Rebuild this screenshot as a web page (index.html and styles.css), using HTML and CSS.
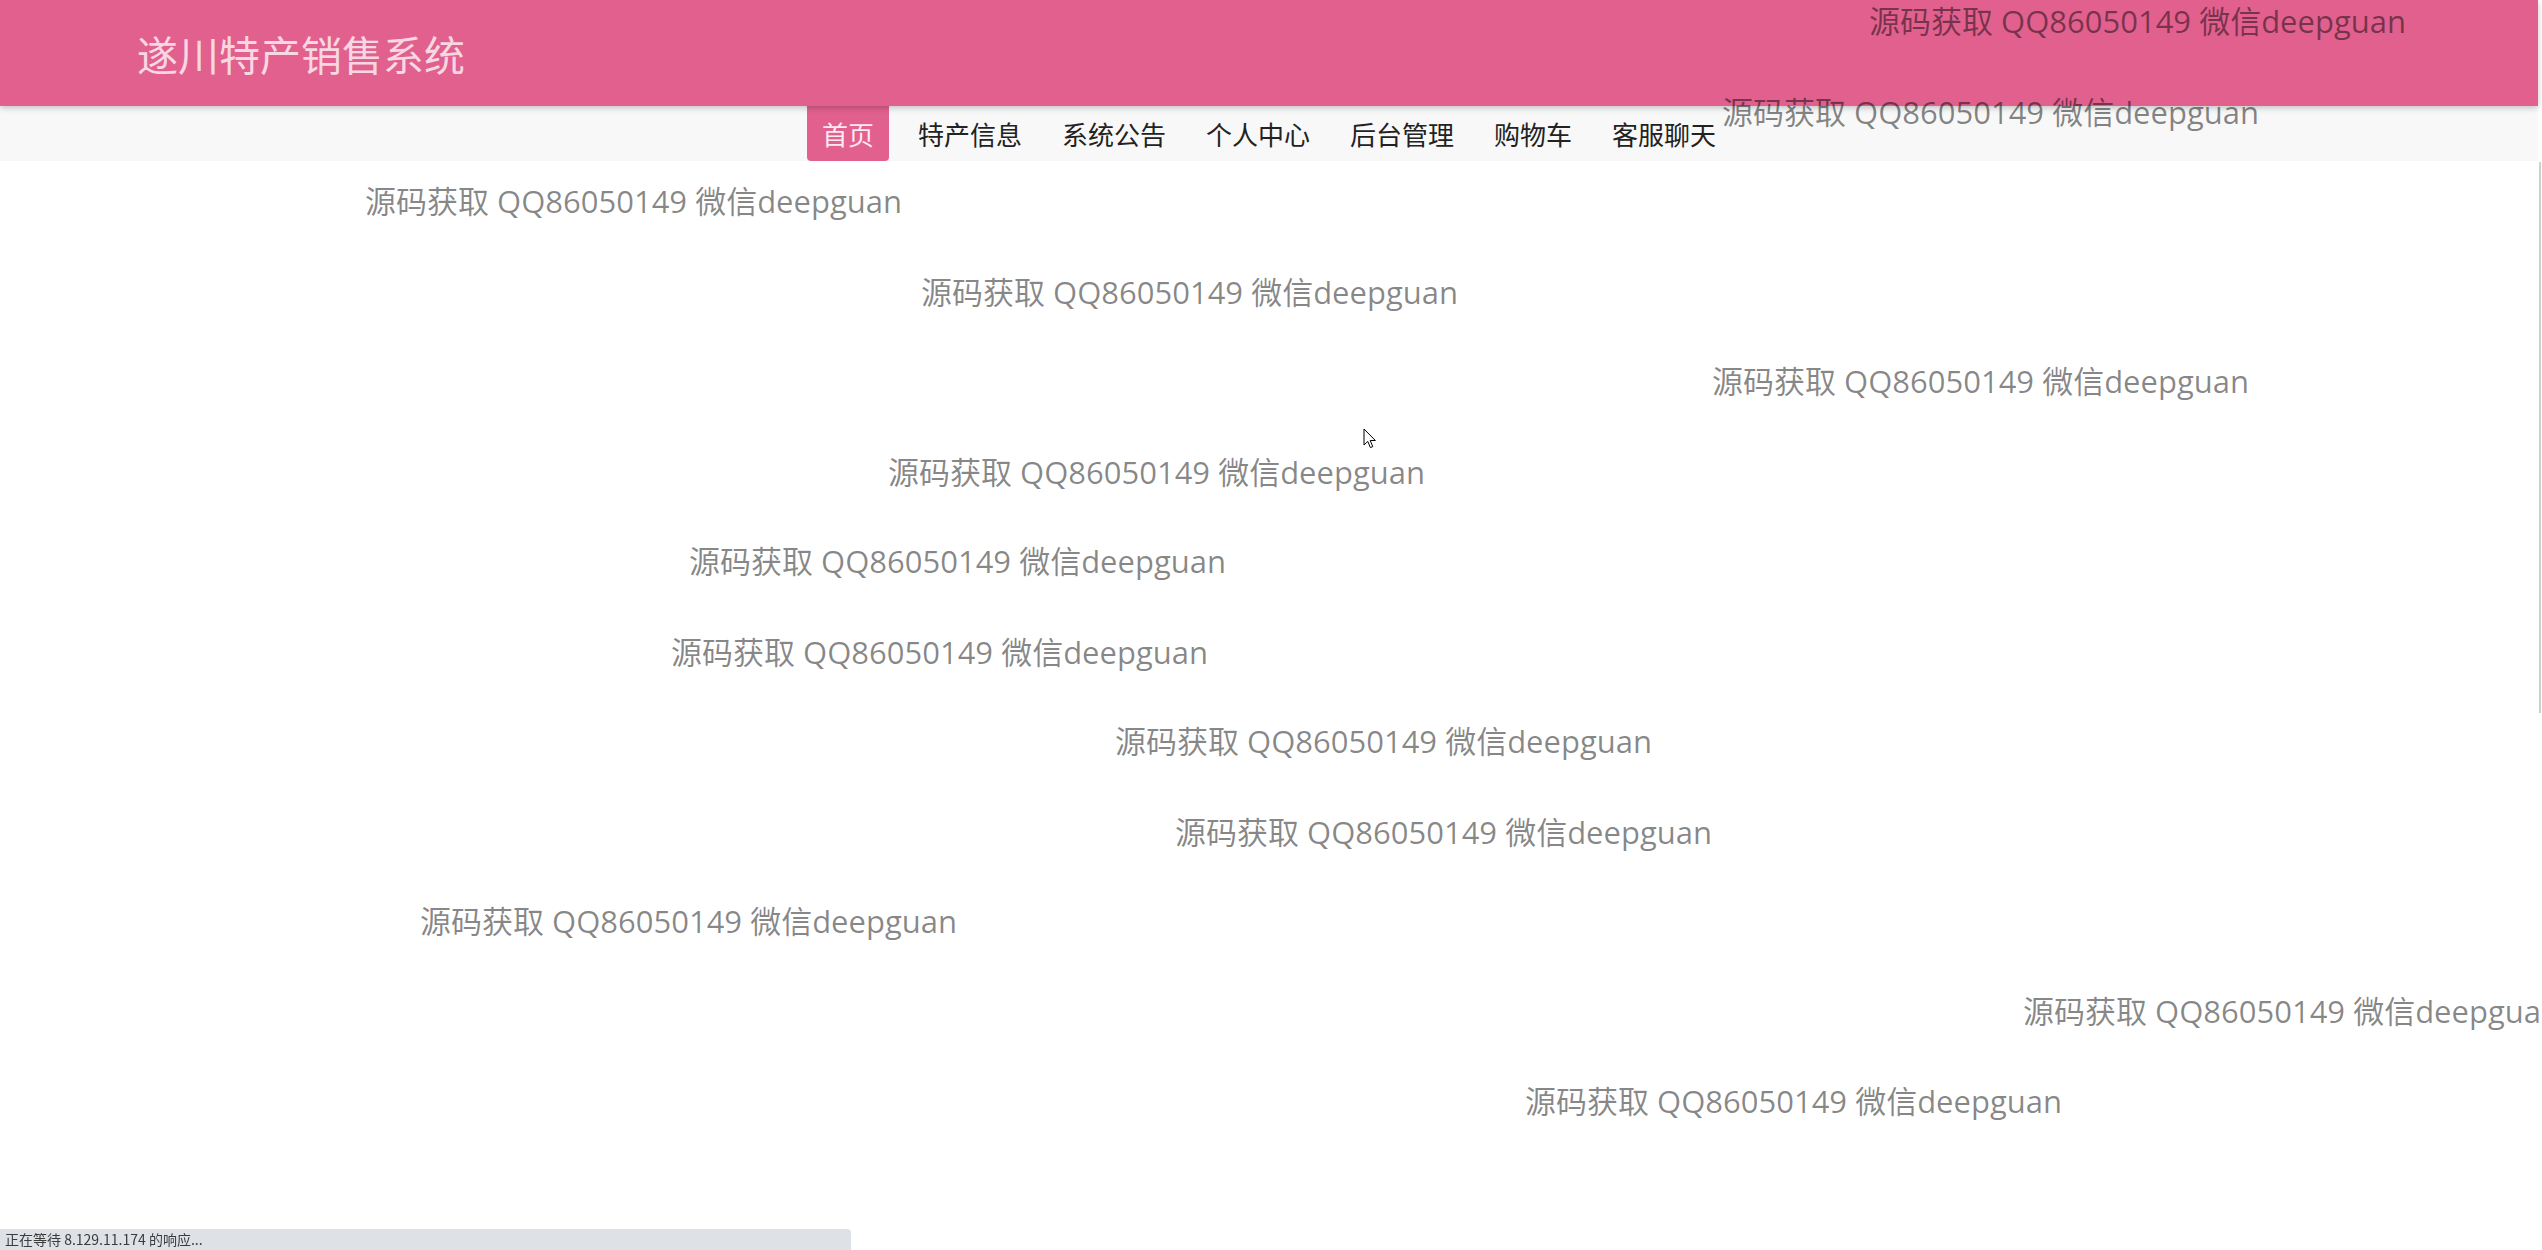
FILE: index.html
```html
<!DOCTYPE html>
<html lang="zh-CN">
<head>
<meta charset="utf-8">
<title>遂川特产销售系统</title>
<link rel="stylesheet" href="styles.css">
</head>
<body>
<div class="page">
  <header class="topbar">
    <h1 class="brand">遂川特产销售系统</h1>
  </header>
  <nav class="menu">
    <ul class="menu-list">
      <li class="menu-item active"><a href="#">首页</a></li>
      <li class="menu-item"><a href="#">特产信息</a></li>
      <li class="menu-item"><a href="#">系统公告</a></li>
      <li class="menu-item"><a href="#">个人中心</a></li>
      <li class="menu-item"><a href="#">后台管理</a></li>
      <li class="menu-item"><a href="#">购物车</a></li>
      <li class="menu-item"><a href="#">客服聊天</a></li>
    </ul>
  </nav>
  <main class="content"></main>
</div>

<div class="watermarks">
  <span class="wm" style="left:1869px;top:1px">源码获取 QQ86050149 微信deepguan</span>
  <span class="wm" style="left:1722px;top:92px">源码获取 QQ86050149 微信deepguan</span>
  <span class="wm" style="left:365px;top:181px">源码获取 QQ86050149 微信deepguan</span>
  <span class="wm" style="left:921px;top:272px">源码获取 QQ86050149 微信deepguan</span>
  <span class="wm" style="left:1712px;top:361px">源码获取 QQ86050149 微信deepguan</span>
  <span class="wm" style="left:888px;top:452px">源码获取 QQ86050149 微信deepguan</span>
  <span class="wm" style="left:689px;top:541px">源码获取 QQ86050149 微信deepguan</span>
  <span class="wm" style="left:671px;top:632px">源码获取 QQ86050149 微信deepguan</span>
  <span class="wm" style="left:1115px;top:721px">源码获取 QQ86050149 微信deepguan</span>
  <span class="wm" style="left:1175px;top:812px">源码获取 QQ86050149 微信deepguan</span>
  <span class="wm" style="left:420px;top:901px">源码获取 QQ86050149 微信deepguan</span>
  <span class="wm" style="left:2023px;top:991px">源码获取 QQ86050149 微信deepguan</span>
  <span class="wm" style="left:1525px;top:1081px">源码获取 QQ86050149 微信deepguan</span>
</div>

<div class="scroll-thumb"></div>

<svg class="cursor" width="14" height="22" viewBox="0 0 14 22" aria-hidden="true">
  <path d="M1 1 L1 17 L4.8 13.4 L7.4 19.6 L9.8 18.6 L7.2 12.5 L12.4 12.5 Z" fill="#fff" stroke="#000" stroke-width="1" stroke-linejoin="miter"/>
</svg>

<div class="status">正在等待 8.129.11.174 的响应...</div>
</body>
</html>
```

FILE: styles.css
```css
html, body {
  margin: 0;
  padding: 0;
  background: #ffffff;
  height: 100%;
  overflow: hidden;
}

body {
  font-family: "Noto Sans CJK SC", "Noto Sans", sans-serif;
  position: relative;
}

.page {
  margin-right: 4px;
  min-height: 100%;
}

.topbar {
  position: relative;
  z-index: 2;
  height: 106px;
  background: #e1608e;
  box-shadow: 0 2px 6px rgba(0, 0, 0, 0.22);
  display: flex;
  align-items: center;
  padding-left: 137px;
}

.brand {
  margin: 0;
  font-size: 41px;
  font-weight: 400;
  color: rgba(255, 255, 255, 0.76);
  line-height: 1;
}

.menu {
  position: relative;
  z-index: 1;
  height: 55px;
  background: #f8f8f8;
}

.menu-list {
  list-style: none;
  margin: 0;
  padding: 0;
  display: flex;
  justify-content: center;
  height: 100%;
}

.menu-item {
  margin: 0 5px;
}

.menu-item.active {
  margin-right: 9px;
}

.menu-item a {
  display: block;
  height: 55px;
  line-height: 55px;
  padding: 0 15px;
  font-size: 26px;
  font-weight: 400;
  color: #222222;
  text-decoration: none;
}

.menu-item.active a {
  background: #e1608e;
  color: #fde9f1;
  border-radius: 0 0 4px 4px;
}

.content {
  min-height: 400px;
}

.watermarks {
  position: absolute;
  inset: 0;
  z-index: 10;
  pointer-events: none;
  overflow: hidden;
}

.wm {
  position: absolute;
  white-space: nowrap;
  font-family: "Open Sans", "Noto Sans CJK SC", sans-serif;
  font-size: 31px;
  line-height: 40px;
  color: rgba(0, 0, 0, 0.47);
}

.scroll-thumb {
  position: absolute;
  right: 1px;
  top: 162px;
  width: 2px;
  height: 551px;
  background: #cfcfcf;
  z-index: 11;
}

.cursor {
  position: absolute;
  left: 1363px;
  top: 428px;
  z-index: 12;
}

.status {
  position: fixed;
  left: 0;
  bottom: 0;
  width: 851px;
  height: 21px;
  box-sizing: border-box;
  padding: 0 0 0 5px;
  background: #dee1e6;
  border-top-right-radius: 4px;
  font-family: "Noto Sans CJK SC", sans-serif;
  font-size: 14px;
  line-height: 21px;
  color: #3c3c3c;
  white-space: nowrap;
  z-index: 13;
}
```
